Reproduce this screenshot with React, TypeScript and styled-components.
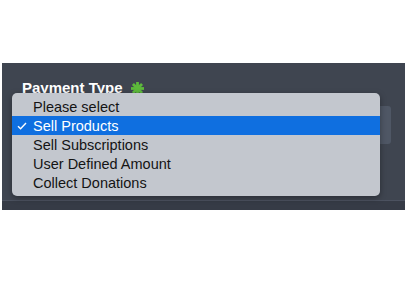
import React from "react";
import styled, { createGlobalStyle } from "styled-components";

const options = [
  "Please select",
  "Sell Products",
  "Sell Subscriptions",
  "User Defined Amount",
  "Collect Donations",
];

const GlobalStyle = createGlobalStyle`
  html, body {
    margin: 0;
    padding: 0;
    background: #ffffff;
  }
  body {
    font-family: "Liberation Sans", Arial, sans-serif;
  }
`;

const Page = styled.div`
  padding-top: 63px;
  padding-left: 2px;
`;

const Panel = styled.div`
  position: relative;
  height: 138px;
  background: #3f4550;
  padding: 16px 14px 0 20px;
  box-sizing: border-box;
  border-bottom: 1px solid #4c5260;
`;

const Footer = styled.div`
  height: 9px;
  background: #363b46;
`;

const Label = styled.div`
  display: flex;
  align-items: center;
  gap: 8px;
  color: #ffffff;
  font-size: 15px;
  font-weight: bold;
  line-height: 18px;
`;

const Field = styled.div`
  margin-top: 9px;
  height: 38px;
  background: #4f5765;
  border-radius: 3px;
`;

const Menu = styled.ul`
  position: absolute;
  left: 10px;
  top: 30px;
  width: 368px;
  margin: 0;
  padding: 4px 0;
  list-style: none;
  background: #c3c7ce;
  border-radius: 5px;
  box-shadow: 0 2px 6px rgba(0, 0, 0, 0.35);
`;

const Option = styled.li<{ $active?: boolean }>`
  display: flex;
  align-items: center;
  height: 19px;
  padding-left: 21px;
  position: relative;
  font-size: 14.5px;
  color: ${(p) => (p.$active ? "#ffffff" : "#141414")};
  background: ${(p) => (p.$active ? "#0f6fe0" : "transparent")};
`;

const Check = styled.svg`
  position: absolute;
  left: 5px;
  top: 6px;
`;

const Asterisk = () => (
  <svg width="13" height="13" viewBox="0 0 12 12">
    <g stroke="#5dba3b" strokeWidth="2.6" strokeLinecap="butt">
      <line x1="6" y1="0" x2="6" y2="12" />
      <line x1="0" y1="6" x2="12" y2="6" />
      <line x1="1.8" y1="1.8" x2="10.2" y2="10.2" />
      <line x1="10.2" y1="1.8" x2="1.8" y2="10.2" />
    </g>
  </svg>
);

export default function App() {
  return (
    <>
      <GlobalStyle />
      <Page>
        <Panel>
          <Label>
            Payment Type
            <Asterisk />
          </Label>
          <Field />
          <Menu>
            {options.map((o, i) => (
              <Option key={o} $active={i === 1}>
                {i === 1 && (
                  <Check width="10" height="8" viewBox="0 0 10 8">
                    <polyline
                      points="1,4.2 3.6,6.8 9,1"
                      fill="none"
                      stroke="#ffffff"
                      strokeWidth="1.4"
                    />
                  </Check>
                )}
                {o}
              </Option>
            ))}
          </Menu>
        </Panel>
        <Footer />
      </Page>
    </>
  );
}
